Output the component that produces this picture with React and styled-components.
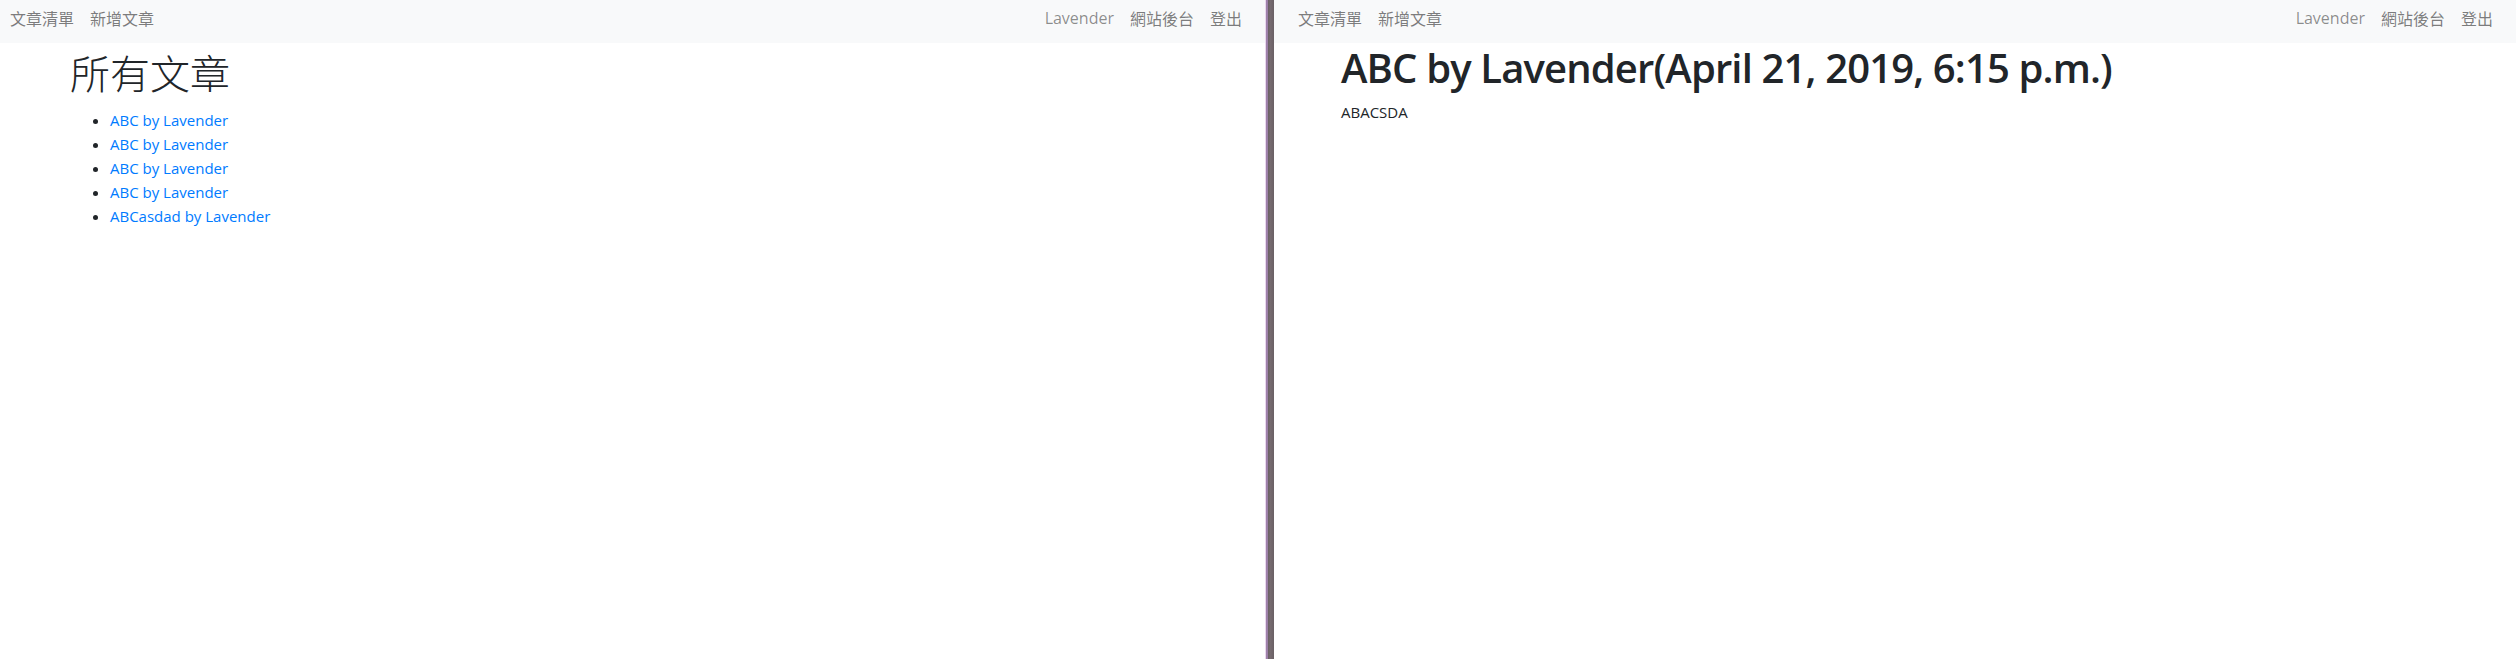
import React from "react";
import styled, { createGlobalStyle } from "styled-components";

const GlobalStyle = createGlobalStyle`
  html, body {
    margin: 0;
    padding: 0;
    background: #ffffff;
  }
  body {
    font-family: "Open Sans", "Noto Sans CJK TC", sans-serif;
    font-size: 16px;
    line-height: 1.5;
    color: #212529;
  }
  * { box-sizing: border-box; }
`;

const Screen = styled.div`
  display: flex;
  width: 2516px;
  height: 659px;
  overflow: hidden;
`;

const Window = styled.div`
  flex: ${(p) => (p.$width ? `0 0 ${p.$width}px` : "1 1 auto")};
  display: flex;
  flex-direction: column;
  background: #ffffff;
  min-width: 0;
`;

const Divider = styled.div`
  flex: 0 0 9px;
  display: flex;
  flex-direction: row;
  background: #6d6367;
  &::before {
    content: "";
    width: 1px;
    background: #ead6ee;
  }
  &::after {
    content: "";
    width: 2px;
    background: #9d80a9;
    order: 2;
  }
  &::before {
    order: 1;
  }
`;

const DividerCore = styled.div`
  flex: 1;
  background: linear-gradient(90deg, #6a5f64, #766b70 40%, #6a6065);
  order: 3;
`;

const Navbar = styled.nav`
  display: flex;
  justify-content: space-between;
  align-items: flex-start;
  height: 43px;
  padding: 6px ${(p) => p.$right}px 0 ${(p) => p.$left}px;
  background: #f8f9fa;
`;

const NavGroup = styled.div`
  display: flex;
`;

const NavLink = styled.a`
  display: block;
  padding: 0 8px;
  font-family: ${(p) =>
    p.$latin
      ? `"Open Sans", "Noto Sans CJK TC", sans-serif`
      : `"Noto Sans CJK TC", sans-serif`};
  font-size: 16px;
  line-height: 24px;
  color: ${(p) => (p.$latin ? "rgba(0, 0, 0, 0.45)" : "rgba(0, 0, 0, 0.52)")};
  text-decoration: none;
  white-space: nowrap;
`;

const Container = styled.main`
  padding-left: ${(p) => p.$left}px;
`;

const CjkHeading = styled.h1`
  margin: 5px 0 12px;
  font-family: "Noto Sans CJK TC", sans-serif;
  font-size: 40px;
  font-weight: 300;
  line-height: 48px;
  color: #212529;
`;

const PostTitle = styled.h1`
  margin: 1px 0 8px;
  font-family: "Open Sans", "Noto Sans CJK TC", sans-serif;
  font-size: 40px;
  font-weight: 600;
  line-height: 48px;
  color: #212529;
  letter-spacing: -0.85px;
`;

const PostBody = styled.p`
  margin: 0;
  font-size: 15px;
  line-height: 24px;
  color: #212529;
`;

const PostList = styled.ul`
  margin: 0;
  padding-left: 40px;
  list-style: disc;
`;

const PostItem = styled.li`
  font-size: 15px;
  line-height: 24px;
`;

const PostLink = styled.a`
  color: #007bff;
  text-decoration: none;
`;

const posts = [
  "ABC by Lavender",
  "ABC by Lavender",
  "ABC by Lavender",
  "ABC by Lavender",
  "ABCasdad by Lavender",
];

function TopNav({ left, right }) {
  return (
    <Navbar $left={left} $right={right}>
      <NavGroup>
        <NavLink href="#">文章清單</NavLink>
        <NavLink href="#">新增文章</NavLink>
      </NavGroup>
      <NavGroup>
        <NavLink $latin>Lavender</NavLink>
        <NavLink href="#">網站後台</NavLink>
        <NavLink href="#">登出</NavLink>
      </NavGroup>
    </Navbar>
  );
}

export default function App() {
  return (
    <>
      <GlobalStyle />
      <Screen>
        <Window $width={1265}>
          <TopNav left={2} right={15} />
          <Container $left={70}>
            <CjkHeading>所有文章</CjkHeading>
            <PostList>
              {posts.map((p, i) => (
                <PostItem key={i}>
                  <PostLink href="#">{p}</PostLink>
                </PostItem>
              ))}
            </PostList>
          </Container>
        </Window>
        <Divider>
          <DividerCore />
        </Divider>
        <Window>
          <TopNav left={16} right={15} />
          <Container $left={67}>
            <PostTitle>ABC by Lavender(April 21, 2019, 6:15 p.m.)</PostTitle>
            <PostBody>ABACSDA</PostBody>
          </Container>
        </Window>
      </Screen>
    </>
  );
}
